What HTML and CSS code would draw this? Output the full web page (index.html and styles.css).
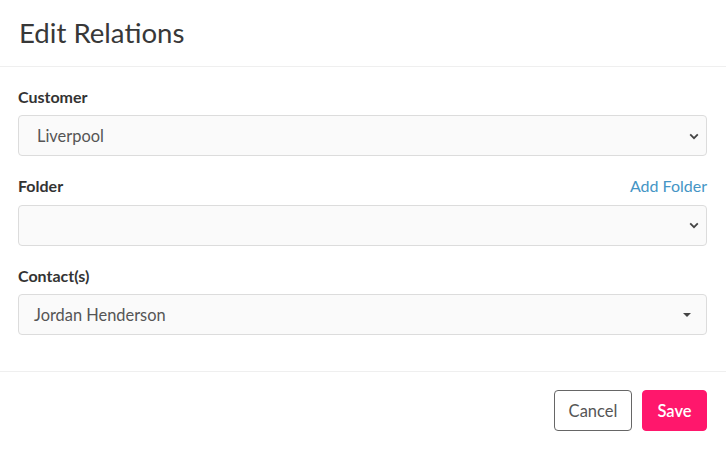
FILE: index.html
```html
<!DOCTYPE html>
<html>
<head>
<meta charset="utf-8">
<link rel="stylesheet" href="styles.css">
</head>
<body>
<div class="modal">
  <div class="modal-header">
    <h1 class="title">Edit Relations</h1>
  </div>
  <div class="modal-body">
    <div class="field">
      <div class="label-row"><label class="label">Customer</label></div>
      <div class="select">
        <span class="value value-native">Liverpool</span>
        <svg class="chevron" width="10" height="7" viewBox="0 0 10 7"><path d="M1.2 1.4 L5 5.2 L8.8 1.4" fill="none" stroke="#444" stroke-width="1.8"/></svg>
      </div>
    </div>
    <div class="field">
      <div class="label-row"><label class="label">Folder</label><a class="link">Add Folder</a></div>
      <div class="select">
        <span class="value value-native"></span>
        <svg class="chevron" width="10" height="7" viewBox="0 0 10 7"><path d="M1.2 1.4 L5 5.2 L8.8 1.4" fill="none" stroke="#444" stroke-width="1.8"/></svg>
      </div>
    </div>
    <div class="field">
      <div class="label-row"><label class="label">Contact(s)</label></div>
      <div class="select">
        <span class="value value-custom">Jordan Henderson</span>
        <svg class="caret" width="8" height="4" viewBox="0 0 8 4"><path d="M0 0 L8 0 L4 4 Z" fill="#444"/></svg>
      </div>
    </div>
  </div>
  <div class="modal-footer">
    <button class="btn btn-cancel">Cancel</button>
    <button class="btn btn-save">Save</button>
  </div>
</div>
</body>
</html>
```
FILE: styles.css
```css
* { box-sizing: border-box; }
body {
  margin: 0;
  background: #fff;
  font-family: Lato, "Noto Sans", sans-serif;
  color: #333;
}
.modal {
  width: 726px;
}
.modal-header {
  height: 67px;
  border-bottom: 1px solid #efefef;
  padding: 0 19px;
  display: flex;
  align-items: center;
}
.title {
  margin: 0;
  font-weight: 400;
  font-size: 27.6px;
  color: #383838;
  position: relative;
  top: -1px;
}
.modal-body {
  padding: 20px 19px 36px 18px;
  display: flex;
  flex-direction: column;
  gap: 20.5px;
}
.field {
  display: flex;
  flex-direction: column;
  gap: 8px;
}
.label-row {
  display: flex;
  justify-content: space-between;
  align-items: center;
  height: 20px;
}
.label {
  font-weight: 700;
  font-size: 16px;
  color: #333;
  position: relative;
  top: -1px;
}
.link {
  font-size: 16px;
  color: #4595c5;
  position: relative;
  top: -1px;
}
.select {
  height: 41px;
  border: 1px solid #dcdcdc;
  border-radius: 4px;
  background: #fafafa;
  display: flex;
  align-items: center;
  justify-content: space-between;
  padding: 0 7px 0 18px;
}
.value {
  font-size: 16.4px;
  color: #555;
}
.value-custom { margin-left: -3px; }
.chevron { margin-top: 1px; }
.caret { margin-right: 8px; }
.modal-footer {
  height: 79px;
  border-top: 1px solid #efefef;
  display: flex;
  justify-content: flex-end;
  align-items: flex-start;
  gap: 10px;
  padding: 18px 19px 0 0;
}
.btn {
  height: 41px;
  font-family: inherit;
  font-size: 16.5px;
  border-radius: 4px;
  padding: 0;
  cursor: pointer;
}
.btn-cancel {
  width: 78px;
  background: #fff;
  border: 1px solid #666;
  color: #555;
}
.btn-save {
  width: 65px;
  background: #ff176c;
  border: 1px solid #ff176c;
  color: #fff;
  font-weight: 600;
}
```
